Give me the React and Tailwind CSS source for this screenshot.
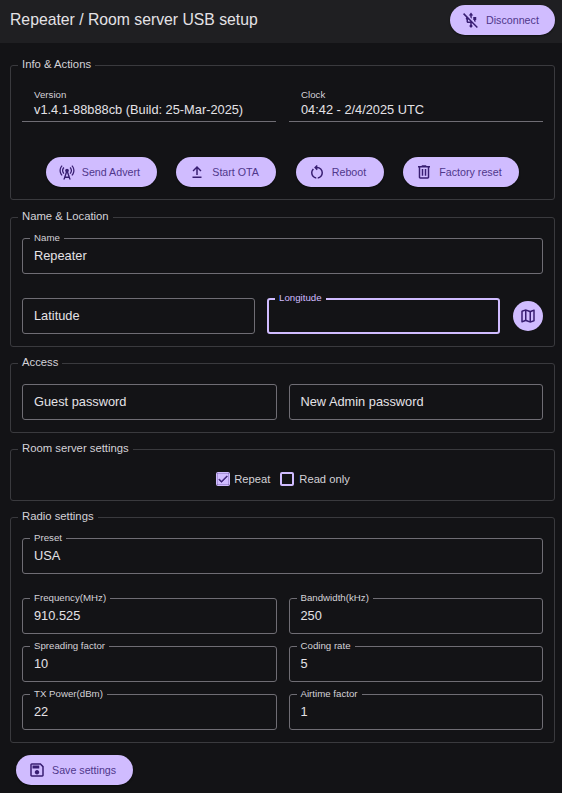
import React from "react";
import { MdUsbOff, MdCellTower, MdCheck } from "react-icons/md";

const sym = (d) => ({ className }) => (
  <svg viewBox="0 -960 960 960" className={className} fill="currentColor"><path d={d} /></svg>
);
const DeleteIcon = sym("M280-120q-33 0-56.5-23.5T200-200v-520h-40v-80h200v-40h240v40h200v80h-40v520q0 33-23.5 56.5T680-120H280Zm400-600H280v520h400v-520ZM360-280h80v-360h-80v360Zm160 0h80v-360h-80v360ZM280-720v520-520Z");
const SaveIcon = sym("M840-680v480q0 33-23.5 56.5T760-120H200q-33 0-56.5-23.5T120-200v-560q0-33 23.5-56.5T200-840h480l160 160Zm-80 34L646-760H200v560h560v-446ZM480-240q50 0 85-35t35-85q0-50-35-85t-85-35q-50 0-85 35t-35 85q0 50 35 85t85 35ZM240-560h360v-160H240v160Zm-40-86v446-560 114Z");
const MapIcon = sym("m600-120-240-84-186 72q-20 8-37-4.5T120-170v-560q0-13 7.5-23t20.5-15l212-72 240 84 186-72q20-8 37 4.5t17 33.5v560q0 13-7.5 23T812-192l-212 72Zm-40-98v-468l-160-56v468l160 56Zm80 0 120-40v-474l-120 46v468Zm-440-10 120-46v-468l-120 40v474Zm440-458v468-468Zm-320-56v468-468Z");
const RestartIcon = sym("M440-122q-121-15-200.5-105.5T160-440q0-66 26-126.5T260-672l57 57q-38 34-57.5 79T240-440q0 88 56 155.5T440-202v80Zm80 0v-80q87-16 143.5-83T720-440q0-100-70-170t-170-70h-3l44 44-56 57-140-140 140-140 56 57-44 44h3q134 0 227 93t93 226q0 121-79.5 211.5T520-122Z");
const UploadIcon = ({ className }) => (
  <svg viewBox="0 0 24 24" className={className} fill="currentColor"><path d="M6 20h12v-2H6v2zM12 4l-6 6 1.41 1.41L11 7.83V16h2V7.83l3.59 3.58L18 10z" /></svg>
);

function Btn({ icon: Icon, label, className = "" }) {
  return (
    <button className={`flex h-[30px] items-center gap-[6px] rounded-full bg-[#d0bcff] pl-3 text-[10.7px] text-[#4f378b] shadow-[0_1px_2px_rgba(0,0,0,0.5)] ${className}`}>
      <Icon className="h-[18px] w-[18px] shrink-0 text-[#381e72]" />
      <span>{label}</span>
    </button>
  );
}

function Section({ title, className = "", children }) {
  return (
    <section className={`relative rounded-[3px] border border-[#3a3a3e] px-[11px] ${className}`}>
      <span className="absolute -top-[8px] left-[7px] bg-[#131316] px-[4px] text-[11.3px] leading-[13px] text-[#d4d2d8]">{title}</span>
      {children}
    </section>
  );
}

function Field({ label, value, placeholder, focused, className = "flex-1" }) {
  return (
    <div className={`relative flex h-9 min-w-0 items-center rounded-[3px] text-[12.8px] ${focused ? "border-2 border-[#d0bcff] px-[10px]" : "border border-[#6f6d74] px-[11px]"} ${className}`}>
      {label && (
        <span className={`absolute bg-[#131316] px-1 text-[9.7px] leading-[11px] ${focused ? "-top-[8px] left-[6px] text-[#d0bcff]" : "-top-[7px] left-[7px] text-[#d4d2d8]"}`}>{label}</span>
      )}
      <span className="text-[#e4e2e6]">{value || placeholder}</span>
    </div>
  );
}

function Info({ label, value }) {
  return (
    <div className="flex-1 border-b border-[#6f6d74] px-3 pb-[3px]">
      <div className="text-[9.7px] leading-[11px] text-[#d4d2d8]">{label}</div>
      <div className="mt-[1px] text-[12.8px] leading-[17px] text-[#e4e2e6]">{value}</div>
    </div>
  );
}

export default function App() {
  return (
    <div className="h-[793px] w-[562px] overflow-hidden bg-[#131316] font-['Liberation_Sans',Arial,sans-serif]">
      <header className="flex h-[43px] items-center justify-between bg-[#1f1f22] pb-[3px] pl-[10px] pr-[7px]">
        <h1 className="text-[15.75px] font-normal text-[#e4e2e6]">Repeater / Room server USB setup</h1>
        <Btn icon={MdUsbOff} label="Disconnect" className="w-[105px]" />
      </header>
      <main className="flex flex-col gap-4 pl-[10px] pr-[7px] pt-[22px]">
        <Section title="Info & Actions" className="mb-[1px] h-[135px] pt-[23px]">
          <div className="flex gap-[13px]">
            <Info label="Version" value="v1.4.1-88b88cb (Build: 25-Mar-2025)" />
            <Info label="Clock" value="04:42 - 2/4/2025 UTC" />
          </div>
          <div className="mt-[35px] flex justify-center gap-[19.5px]">
            <Btn icon={MdCellTower} label="Send Advert" className="w-[111px]" />
            <Btn icon={UploadIcon} label="Start OTA" className="w-[100px]" />
            <Btn icon={RestartIcon} label="Reboot" className="w-[88px]" />
            <Btn icon={DeleteIcon} label="Factory reset" className="w-[116px]" />
          </div>
        </Section>
        <Section title="Name & Location" className="h-[130px] pt-[20px]">
          <Field label="Name" value="Repeater" />
          <div className="mt-[24px] flex items-center gap-3">
            <Field placeholder="Latitude" className="w-[233px]" />
            <Field label="Longitude" focused className="w-[233px]" />
            <button className="ml-auto flex h-[30px] w-[30px] shrink-0 items-center justify-center rounded-full bg-[#d0bcff]">
              <MapIcon className="h-[18px] w-[18px] text-[#381e72]" />
            </button>
          </div>
        </Section>
        <Section title="Access" className="h-[70px] pt-[20px]">
          <div className="flex gap-3">
            <Field placeholder="Guest password" />
            <Field placeholder="New Admin password" />
          </div>
        </Section>
        <Section title="Room server settings" className="flex h-[52px] items-center justify-center pl-[12px] pt-[8px]">
          <label className="flex items-center gap-[4px] text-[11.2px] text-[#d4d2d8]">
            <span className="flex h-[14px] w-[14px] items-center justify-center rounded-[2px] bg-[#d0bcff]">
              <MdCheck className="h-3 w-3 stroke-1 text-[#381e72]" />
            </span>
            Repeat
          </label>
          <label className="ml-[10px] flex items-center gap-[5px] text-[11.2px] text-[#d4d2d8]">
            <span className="h-[14px] w-[14px] rounded-[2px] border-2 border-[#d0bcff]" />
            Read only
          </label>
        </Section>
        <Section title="Radio settings" className="h-[226px] pt-[20px]">
          <Field label="Preset" value="USA" />
          <div className="mt-[24px] grid grid-cols-2 gap-x-3 gap-y-3">
            <Field label="Frequency(MHz)" value="910.525" />
            <Field label="Bandwidth(kHz)" value="250" />
            <Field label="Spreading factor" value="10" />
            <Field label="Coding rate" value="5" />
            <Field label="TX Power(dBm)" value="22" />
            <Field label="Airtime factor" value="1" />
          </div>
        </Section>
      </main>
      <div className="pl-4 pt-[12px]">
        <Btn icon={SaveIcon} label="Save settings" className="w-[117px]" />
      </div>
    </div>
  );
}
